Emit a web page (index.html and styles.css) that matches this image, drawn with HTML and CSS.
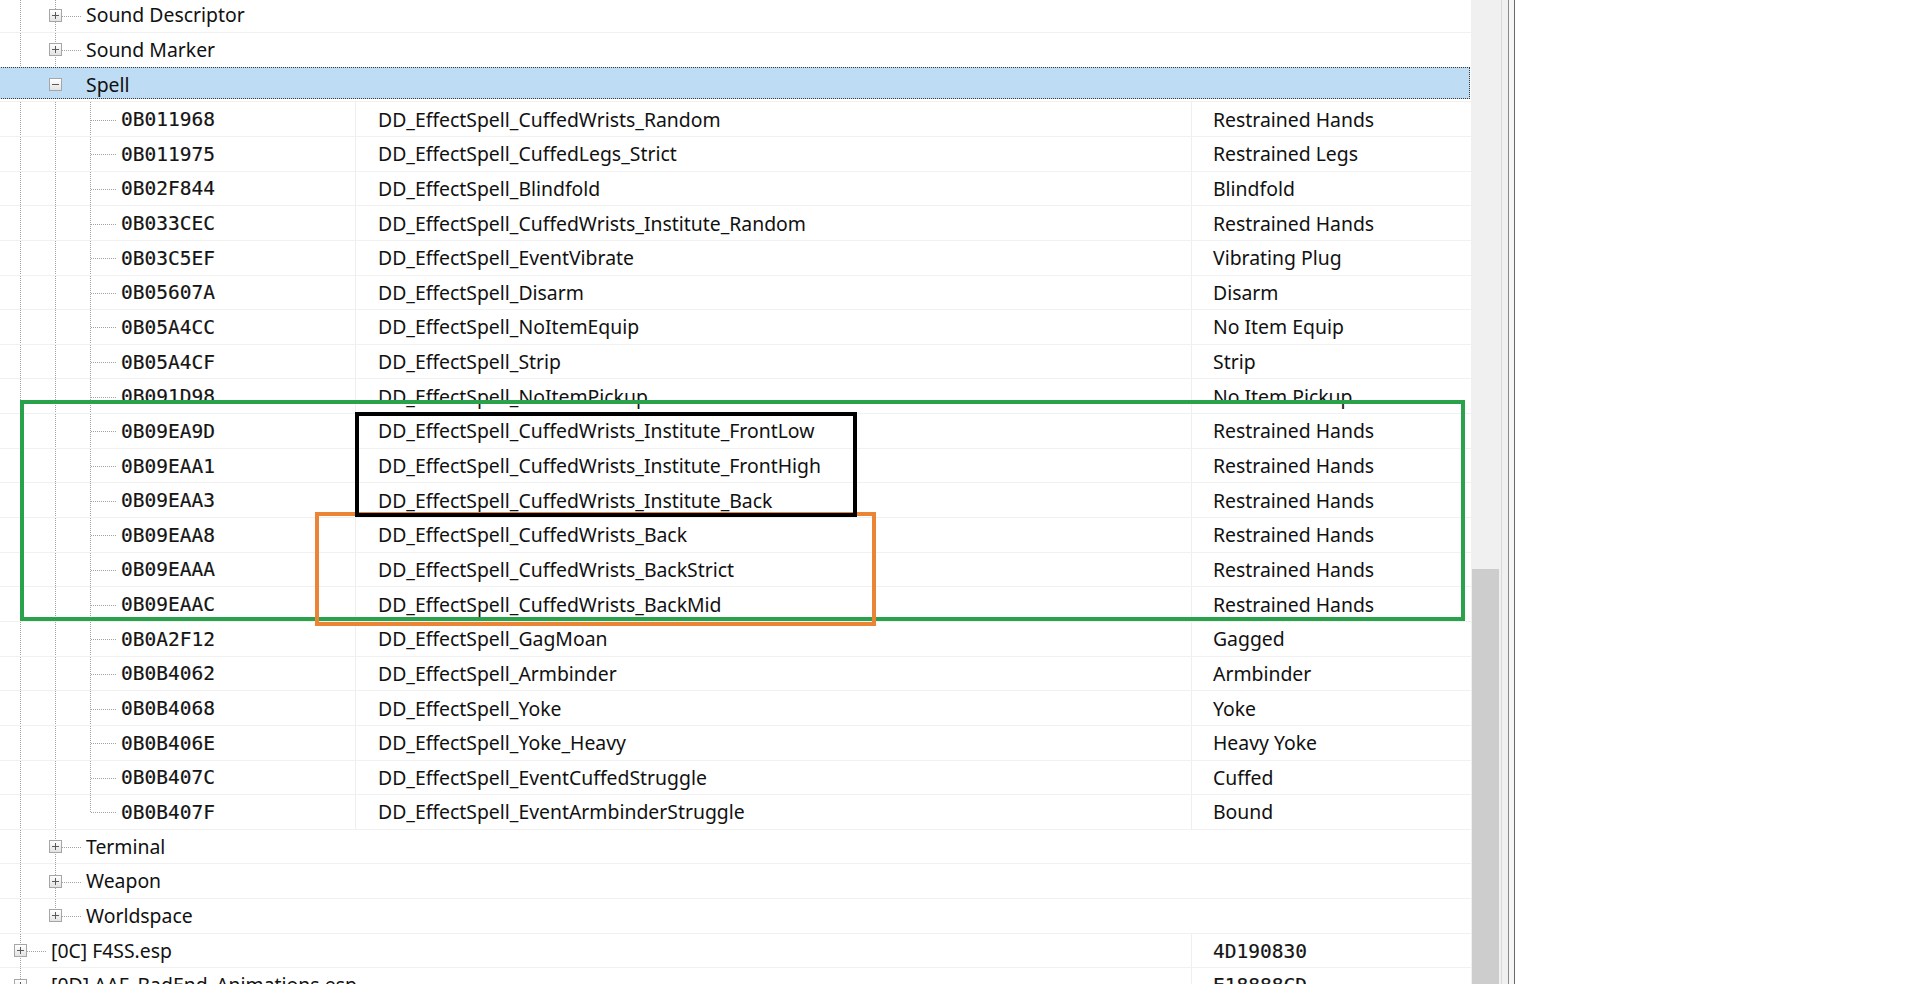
FILE: index.html
```html
<!DOCTYPE html>
<html>
<head>
<meta charset="utf-8">
<title>Tree view</title>
<link rel="stylesheet" href="styles.css">
</head>
<body>
<div class="app">
  <div class="tree">
    <div class="rows">
      <div class="row"><div class="c1"><span class="g v"></span><span class="n v"><i class="box plus"></i></span><span class="lbl">Sound Descriptor</span></div></div>
      <div class="row"><div class="c1"><span class="g v"></span><span class="n v"><i class="box plus"></i></span><span class="lbl">Sound Marker</span></div></div>
      <div class="row sel"><div class="c1"><span class="g v"></span><span class="n v"><i class="box minus"></i></span><span class="lbl">Spell</span></div></div>

      <div class="row data"><div class="c1"><span class="g v"></span><span class="g v"></span><span class="n v"></span><span class="id">0B011968</span></div><div class="c2">DD_EffectSpell_CuffedWrists_Random</div><div class="c3">Restrained Hands</div></div>
      <div class="row data"><div class="c1"><span class="g v"></span><span class="g v"></span><span class="n v"></span><span class="id">0B011975</span></div><div class="c2">DD_EffectSpell_CuffedLegs_Strict</div><div class="c3">Restrained Legs</div></div>
      <div class="row data"><div class="c1"><span class="g v"></span><span class="g v"></span><span class="n v"></span><span class="id">0B02F844</span></div><div class="c2">DD_EffectSpell_Blindfold</div><div class="c3">Blindfold</div></div>
      <div class="row data"><div class="c1"><span class="g v"></span><span class="g v"></span><span class="n v"></span><span class="id">0B033CEC</span></div><div class="c2">DD_EffectSpell_CuffedWrists_Institute_Random</div><div class="c3">Restrained Hands</div></div>
      <div class="row data"><div class="c1"><span class="g v"></span><span class="g v"></span><span class="n v"></span><span class="id">0B03C5EF</span></div><div class="c2">DD_EffectSpell_EventVibrate</div><div class="c3">Vibrating Plug</div></div>
      <div class="row data"><div class="c1"><span class="g v"></span><span class="g v"></span><span class="n v"></span><span class="id">0B05607A</span></div><div class="c2">DD_EffectSpell_Disarm</div><div class="c3">Disarm</div></div>
      <div class="row data"><div class="c1"><span class="g v"></span><span class="g v"></span><span class="n v"></span><span class="id">0B05A4CC</span></div><div class="c2">DD_EffectSpell_NoItemEquip</div><div class="c3">No Item Equip</div></div>
      <div class="row data"><div class="c1"><span class="g v"></span><span class="g v"></span><span class="n v"></span><span class="id">0B05A4CF</span></div><div class="c2">DD_EffectSpell_Strip</div><div class="c3">Strip</div></div>
      <div class="row data"><div class="c1"><span class="g v"></span><span class="g v"></span><span class="n v"></span><span class="id">0B091D98</span></div><div class="c2">DD_EffectSpell_NoItemPickup</div><div class="c3">No Item Pickup</div></div>
      <div class="row data"><div class="c1"><span class="g v"></span><span class="g v"></span><span class="n v"></span><span class="id">0B09EA9D</span></div><div class="c2">DD_EffectSpell_CuffedWrists_Institute_FrontLow</div><div class="c3">Restrained Hands</div></div>
      <div class="row data"><div class="c1"><span class="g v"></span><span class="g v"></span><span class="n v"></span><span class="id">0B09EAA1</span></div><div class="c2">DD_EffectSpell_CuffedWrists_Institute_FrontHigh</div><div class="c3">Restrained Hands</div></div>
      <div class="row data"><div class="c1"><span class="g v"></span><span class="g v"></span><span class="n v"></span><span class="id">0B09EAA3</span></div><div class="c2">DD_EffectSpell_CuffedWrists_Institute_Back</div><div class="c3">Restrained Hands</div></div>
      <div class="row data"><div class="c1"><span class="g v"></span><span class="g v"></span><span class="n v"></span><span class="id">0B09EAA8</span></div><div class="c2">DD_EffectSpell_CuffedWrists_Back</div><div class="c3">Restrained Hands</div></div>
      <div class="row data"><div class="c1"><span class="g v"></span><span class="g v"></span><span class="n v"></span><span class="id">0B09EAAA</span></div><div class="c2">DD_EffectSpell_CuffedWrists_BackStrict</div><div class="c3">Restrained Hands</div></div>
      <div class="row data"><div class="c1"><span class="g v"></span><span class="g v"></span><span class="n v"></span><span class="id">0B09EAAC</span></div><div class="c2">DD_EffectSpell_CuffedWrists_BackMid</div><div class="c3">Restrained Hands</div></div>
      <div class="row data"><div class="c1"><span class="g v"></span><span class="g v"></span><span class="n v"></span><span class="id">0B0A2F12</span></div><div class="c2">DD_EffectSpell_GagMoan</div><div class="c3">Gagged</div></div>
      <div class="row data"><div class="c1"><span class="g v"></span><span class="g v"></span><span class="n v"></span><span class="id">0B0B4062</span></div><div class="c2">DD_EffectSpell_Armbinder</div><div class="c3">Armbinder</div></div>
      <div class="row data"><div class="c1"><span class="g v"></span><span class="g v"></span><span class="n v"></span><span class="id">0B0B4068</span></div><div class="c2">DD_EffectSpell_Yoke</div><div class="c3">Yoke</div></div>
      <div class="row data"><div class="c1"><span class="g v"></span><span class="g v"></span><span class="n v"></span><span class="id">0B0B406E</span></div><div class="c2">DD_EffectSpell_Yoke_Heavy</div><div class="c3">Heavy Yoke</div></div>
      <div class="row data"><div class="c1"><span class="g v"></span><span class="g v"></span><span class="n v"></span><span class="id">0B0B407C</span></div><div class="c2">DD_EffectSpell_EventCuffedStruggle</div><div class="c3">Cuffed</div></div>
      <div class="row data"><div class="c1"><span class="g v"></span><span class="g v"></span><span class="n last"></span><span class="id">0B0B407F</span></div><div class="c2">DD_EffectSpell_EventArmbinderStruggle</div><div class="c3">Bound</div></div>

      <div class="row"><div class="c1"><span class="g v"></span><span class="n v"><i class="box plus"></i></span><span class="lbl">Terminal</span></div></div>
      <div class="row"><div class="c1"><span class="g v"></span><span class="n v"><i class="box plus"></i></span><span class="lbl">Weapon</span></div></div>
      <div class="row"><div class="c1"><span class="g v"></span><span class="n last"><i class="box plus"></i></span><span class="lbl">Worldspace</span></div></div>
      <div class="row plug"><div class="c1"><span class="n v"><i class="box plus"></i></span><span class="lbl">[0C] F4SS.esp</span></div><div class="c2"></div><div class="c3"><span class="id">4D190830</span></div></div>
      <div class="row plug"><div class="c1 wide"><span class="n v"><i class="box plus"></i></span><span class="lbl">[0D] AAF_BadEnd_Animations.esp</span></div><div class="c2 none"></div><div class="c3"><span class="id">E18888CD</span></div></div>
    </div>

    <div class="mark green"></div>
    <div class="mark orange"></div>
    <div class="mark black"></div>
  </div>
  <div class="vscroll"><div class="thumb"></div></div>
  <div class="splitter"></div>
  <div class="pane"></div>
</div>
</body>
</html>
```

FILE: styles.css
```css
html, body {
  margin: 0;
  padding: 0;
  background: #ffffff;
}

.app {
  display: flex;
  width: 1920px;
  height: 984px;
  overflow: hidden;
  font-family: "Noto Sans", "Open Sans", sans-serif;
  font-size: 19.4px;
  color: #111111;
}

.tree {
  position: relative;
  width: 1471px;
  flex: none;
  height: 984px;
  overflow: hidden;
  background: #ffffff;
}

.rows {
  margin-top: -1.6px;
  display: flex;
  flex-direction: column;
}

.row {
  position: relative;
  box-sizing: border-box;
  height: 34.65px;
  flex: none;
  display: grid;
  grid-template-columns: 355px 836px 280px;
  border-bottom: 1px solid #f1f1f1;
  white-space: nowrap;
}

.row.sel {
  z-index: 0;
  grid-template-columns: 1471px;
}

.row.sel::after {
  content: "";
  position: absolute;
  left: -2px;
  right: 1px;
  top: -1px;
  bottom: 2px;
  background: #bedcf3;
  border: 1px dotted #3a3a3a;
  z-index: -1;
}

.c1 {
  display: flex;
  align-items: center;
  overflow: hidden;
}

.row:not(.data):not(.plug) .c1 {
  grid-column: 1 / -1;
}

.c1.wide {
  overflow: visible;
}

.c2, .c3 {
  display: flex;
  align-items: center;
  border-left: 1px solid #efefef;
  overflow: hidden;
}

.c2 {
  padding-left: 22px;
}

.c3 {
  padding-left: 21px;
}

.plug .c2 {
  border-left: none;
}

.lbl {
  padding-left: 4px;
  line-height: 34px;
}

.id {
  padding-left: 4px;
  padding-top: 2px;
  font-family: "DejaVu Sans Mono", "Liberation Mono", monospace;
  font-size: 19.5px;
  color: #141414;
  line-height: 34px;
  -webkit-text-stroke: 0.2px #141414;
}

.c3 .id {
  padding-left: 0;
}

/* tree guide lines */
.g, .n {
  position: relative;
  flex: none;
  align-self: stretch;
  margin-bottom: -1px;
}

.g {
  width: 35px;
}

.n {
  width: 47px;
}

.g.v::before,
.n::before {
  content: "";
  position: absolute;
  left: 20px;
  top: 0;
  bottom: 0;
  width: 1px;
  background: repeating-linear-gradient(to bottom, #a3a3a3 0 1px, transparent 1px 2px);
}

.n.last::before {
  bottom: 50%;
}

.n::after {
  content: "";
  position: absolute;
  left: 21px;
  right: 0;
  top: 50%;
  height: 1px;
  background: repeating-linear-gradient(to right, #a3a3a3 0 1px, transparent 1px 2px);
}

.sel .g::before,
.sel .n::before,
.sel .n::after {
  display: none;
}

.box {
  position: absolute;
  left: 14px;
  top: 50%;
  margin-top: -7px;
  width: 11px;
  height: 11px;
  border: 1px solid #a6a6a6;
  background: linear-gradient(to bottom, #ffffff, #e3e3e3);
  z-index: 1;
}

.box::before {
  content: "";
  position: absolute;
  left: 2px;
  right: 2px;
  top: 5px;
  height: 1px;
  background: #5a5a5a;
}

.box.plus::after {
  content: "";
  position: absolute;
  top: 2px;
  bottom: 2px;
  left: 5px;
  width: 1px;
  background: #5a5a5a;
}

/* annotation rectangles drawn over the tree */
.mark {
  position: absolute;
  box-sizing: border-box;
  border-style: solid;
  border-width: 4px;
  pointer-events: none;
}

.green {
  left: 20px;
  top: 400px;
  width: 1445px;
  height: 221px;
  border-color: #2aa24c;
}

.orange {
  left: 315px;
  top: 512px;
  width: 561px;
  height: 114px;
  border-color: #ea8535;
}

.black {
  left: 355px;
  top: 412px;
  width: 502px;
  height: 105px;
  border-color: #000000;
}

/* scrollbar */
.vscroll {
  width: 30px;
  flex: none;
  background: #f0f0f0;
  display: flex;
  flex-direction: column;
  padding: 569px 2px 0 1px;
  box-sizing: border-box;
}

.thumb {
  flex: 1;
  background: #cdcdcd;
}

.splitter {
  width: 14px;
  flex: none;
  box-sizing: border-box;
  border-left: 1px solid #d9d9d9;
  background: linear-gradient(to right, #f0f0f0 0 6px, #8a8a8a 6px 7px, #f6f6f6 7px 12px, #6a6a6a 12px 13px);
}

.pane {
  flex: 1;
  background: #ffffff;
}
```
